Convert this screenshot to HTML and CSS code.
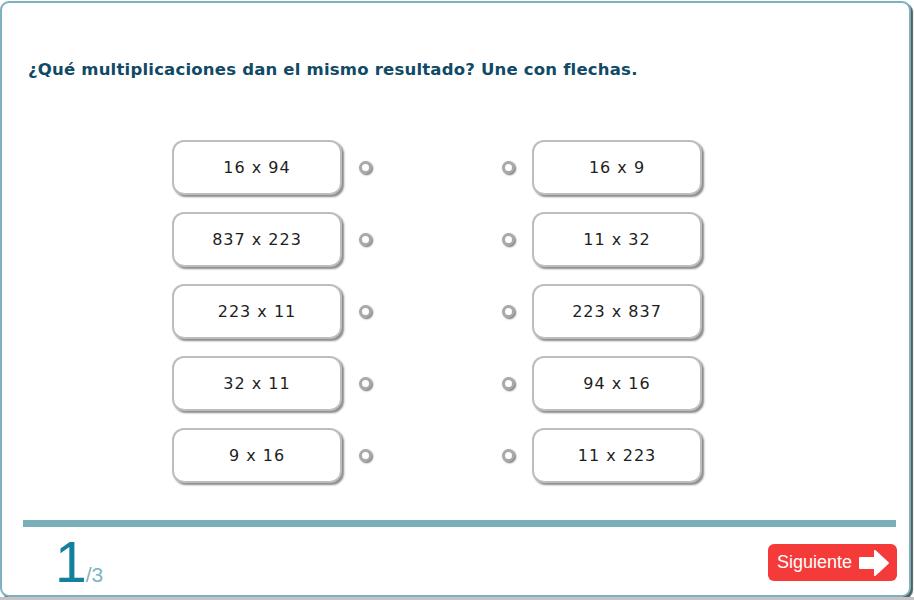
FILE: index.html
```html
<!DOCTYPE html>
<html lang="es">
  <head>
    <meta charset="UTF-8" />
    <meta name="viewport" content="width=device-width, initial-scale=1.0" />
    <title>Une con flechas</title>
    <link rel="stylesheet" href="styles.css">
  </head>
  <body>
    <div class="frame">
      <!-- Enunciado -->
      <h1 class="title">¿Qué multiplicaciones dan el mismo resultado? Une con flechas.</h1>

      <!-- Parejas para unir -->
      <div class="board">
        <div class="row">
          <div class="card">16 x 94</div><span class="dot"></span>
          <span class="dot right"></span><div class="card">16 x 9</div>
        </div>
        <div class="row">
          <div class="card">837 x 223</div><span class="dot"></span>
          <span class="dot right"></span><div class="card">11 x 32</div>
        </div>
        <div class="row">
          <div class="card">223 x 11</div><span class="dot"></span>
          <span class="dot right"></span><div class="card">223 x 837</div>
        </div>
        <div class="row">
          <div class="card">32 x 11</div><span class="dot"></span>
          <span class="dot right"></span><div class="card">94 x 16</div>
        </div>
        <div class="row">
          <div class="card">9 x 16</div><span class="dot"></span>
          <span class="dot right"></span><div class="card">11 x 223</div>
        </div>
      </div>

      <!-- Pie: contador y boton -->
      <div class="bar"></div>
      <div class="footer">
        <div class="counter"><span class="current">1</span><span class="total">/3</span></div>
        <button class="next">
          Siguiente
          <svg width="32" height="30" viewBox="0 0 32 30">
            <path d="M2 10 H17 V3 L30 15 L17 27 V20 H2 Z" fill="#fff" stroke="#fff" stroke-width="2" stroke-linejoin="round" />
          </svg>
        </button>
      </div>
    </div>
  </body>
</html>
```

FILE: styles.css
```css
/* Page */
html {
  background-color: #c4c4c4;
}

body {
  margin: 0;
  padding-top: 1px;
  background-color: #fff;
  font-family: "DejaVu Sans", Verdana, sans-serif;
}

/* Outer rounded frame */
.frame {
  box-sizing: border-box;
  width: 911px;
  height: 596px;
  border: 2px solid #7eb1bd;
  border-radius: 9px;
  box-shadow: 2px 2px 1px #4f5f60;
  background-color: #fff;
  display: flex;
  flex-direction: column;
  overflow: hidden;
}

.frame > * {
  flex-shrink: 0;
}

.title {
  margin: 57px 0 0 26px;
  font-size: 16.5px;
  line-height: 20px;
  font-weight: bold;
  color: #104a66;
  letter-spacing: 0.2px;
}

/* Matching board */
.board {
  margin: 60px 0 0 170px;
  display: flex;
  flex-direction: column;
  gap: 17px;
}

.row {
  display: flex;
  align-items: center;
  height: 55px;
}

.card {
  box-sizing: border-box;
  width: 170px;
  height: 55px;
  border: 2px solid #bdbdbd;
  border-radius: 12px;
  box-shadow: 2px 2px 2px #8a8a8a;
  background-color: #fff;
  display: flex;
  align-items: center;
  justify-content: center;
  font-size: 16px;
  letter-spacing: 1px;
  color: #1e1e1e;
  padding-bottom: 1px;
}

.dot {
  box-sizing: border-box;
  width: 13px;
  height: 13px;
  border-radius: 50%;
  border: 3px solid #a9a9a9;
  background-color: #fff;
  box-shadow: 1px 1px 2px #6a6a6a;
  margin-left: 17px;
}

.dot.right {
  margin-left: 130px;
  margin-right: 17px;
}

/* Footer */
.bar {
  margin: 37px 0 0 21px;
  width: 873px;
  height: 7px;
  background-color: #7aaeb9;
}

.footer {
  display: flex;
  justify-content: space-between;
  align-items: flex-start;
  padding: 0 12px 0 53px;
}

.counter {
  font-family: "Liberation Sans", Arial, sans-serif;
  margin-top: 7px;
  line-height: 57px;
}

.current {
  font-size: 57px;
  color: #13819d;
}

.total {
  font-size: 21px;
  color: #7fb3c1;
  margin-left: -1px;
}

.next {
  margin-top: 17px;
  width: 129px;
  height: 37px;
  border: none;
  border-radius: 6px;
  background-color: #f53a3a;
  color: #fff;
  font-family: "Liberation Sans", Arial, sans-serif;
  font-size: 18px;
  display: flex;
  align-items: center;
  padding: 0 7px 0 9px;
  gap: 6px;
  cursor: pointer;
}
```
